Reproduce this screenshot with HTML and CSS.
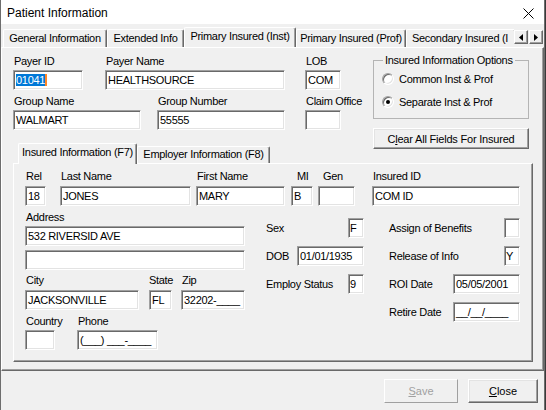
FILE: index.html
```html
<!DOCTYPE html>
<html lang="en">
<head>
    <meta charset="UTF-8">
    <title>Patient Information</title>
    <link rel="stylesheet" href="styles.css">
</head>
<body>
    <div class="window">
        <div class="titlebar">
            <span class="title">Patient Information</span>
            <svg class="close" width="11" height="11" viewBox="0 0 11 11">
                <path d="M0.5 0.5 L10.5 10.5 M10.5 0.5 L0.5 10.5" stroke="#000" stroke-width="1" fill="none"/>
            </svg>
        </div>

        <div class="tabs">
            <div class="tab-list">
                <div class="tab t-general">General Information</div>
                <div class="tab t-extended">Extended Info</div>
                <div class="tab t-inst active">Primary Insured (Inst)</div>
                <div class="tab t-prof">Primary Insured (Prof)</div>
                <div class="tab t-second">Secondary Insured (I</div>
            </div>
            <div class="tab-scroll">
                <span class="arrow"><svg width="4" height="7" viewBox="0 0 4 7"><path d="M4 0 L0 3.5 L4 7 Z" fill="#000"/></svg></span>
                <span class="arrow"><svg width="4" height="7" viewBox="0 0 4 7"><path d="M0 0 L4 3.5 L0 7 Z" fill="#000"/></svg></span>
            </div>
        </div>

        <div class="page">
            <div class="top">
                <div class="top-left">
                    <div class="row">
                        <div class="field f-payer-id">
                            <label>Payer ID</label>
                            <div class="box"><span class="sel">01041</span><span class="caret"></span></div>
                        </div>
                        <div class="field f-payer-name">
                            <label>Payer Name</label>
                            <div class="box">HEALTHSOURCE</div>
                        </div>
                        <div class="field f-lob">
                            <label>LOB</label>
                            <div class="box">COM</div>
                        </div>
                    </div>
                    <div class="row">
                        <div class="field f-group-name">
                            <label>Group Name</label>
                            <div class="box">WALMART</div>
                        </div>
                        <div class="field f-group-number">
                            <label>Group Number</label>
                            <div class="box">55555</div>
                        </div>
                        <div class="field f-claim-office">
                            <label>Claim Office</label>
                            <div class="box"></div>
                        </div>
                    </div>
                </div>
                <div class="top-right">
                    <fieldset class="options">
                        <legend>Insured Information Options</legend>
                        <div class="radio first"><span class="dot"></span>Common Inst &amp; Prof</div>
                        <div class="radio"><span class="dot checked"></span>Separate Inst &amp; Prof</div>
                    </fieldset>
                    <button class="btn btn-clear">C<u>l</u>ear All Fields For Insured</button>
                </div>
            </div>

            <div class="subtabs">
                <div class="tab s-insured active">Insured Information (F7)</div>
                <div class="tab s-employer">Employer Information (F8)</div>
            </div>

            <div class="subpage">
                <div class="row">
                    <div class="field s f-rel">
                        <label>Rel</label>
                        <div class="box">18</div>
                    </div>
                    <div class="field s f-last">
                        <label>Last Name</label>
                        <div class="box">JONES</div>
                    </div>
                    <div class="field s f-first">
                        <label>First Name</label>
                        <div class="box">MARY</div>
                    </div>
                    <div class="field s f-mi">
                        <label>MI</label>
                        <div class="box">B</div>
                    </div>
                    <div class="field s f-gen">
                        <label>Gen</label>
                        <div class="box"></div>
                    </div>
                    <div class="field s f-insured-id">
                        <label>Insured ID</label>
                        <div class="box">COM ID</div>
                    </div>
                </div>

                <div class="lower">
                    <div class="addr-col">
                        <div class="field f-address">
                            <label>Address</label>
                            <div class="box">532 RIVERSID AVE</div>
                        </div>
                        <div class="box address2"></div>
                        <div class="row city-row">
                            <div class="field s f-city">
                                <label>City</label>
                                <div class="box">JACKSONVILLE</div>
                            </div>
                            <div class="field s f-state">
                                <label>State</label>
                                <div class="box">FL</div>
                            </div>
                            <div class="field s f-zip">
                                <label>Zip</label>
                                <div class="box">32202-____</div>
                            </div>
                        </div>
                        <div class="row country-row">
                            <div class="field f-country">
                                <label>Country</label>
                                <div class="box"></div>
                            </div>
                            <div class="field f-phone">
                                <label>Phone</label>
                                <div class="box">(___) ___-____</div>
                            </div>
                        </div>
                    </div>

                    <div class="mid-col">
                        <div class="pair"><span>Sex</span><div class="box b-small">F</div></div>
                        <div class="pair"><span>DOB</span><div class="box b-date">01/01/1935</div></div>
                        <div class="pair"><span>Employ Status</span><div class="box b-small">9</div></div>
                    </div>

                    <div class="right-col">
                        <div class="pair"><span>Assign of Benefits</span><div class="box b-small"></div></div>
                        <div class="pair"><span>Release of Info</span><div class="box b-small">Y</div></div>
                        <div class="pair"><span>ROI Date</span><div class="box b-date">05/05/2001</div></div>
                        <div class="pair"><span>Retire Date</span><div class="box b-date">__/__/____</div></div>
                    </div>
                </div>
            </div>
        </div>

        <div class="footer">
            <button class="btn btn-save" disabled><u>S</u>ave</button>
            <button class="btn btn-close"><u>C</u>lose</button>
        </div>
    </div>
</body>
</html>
```

FILE: styles.css
```css
* {
    box-sizing: border-box;
}

html, body {
    margin: 0;
}

body {
    background: #3a3a3a;
    font-family: "Liberation Sans", Arial, sans-serif;
    font-size: 11px;
    letter-spacing: -0.3px;
    color: #000;
}

.window {
    width: 545px;
    height: 410px;
    background: #f0f0f0;
    border-left: 1px solid #6d6d6d;
    border-right: 1px solid #6d6d6d;
    overflow: hidden;
}

/* title bar */
.titlebar {
    height: 24px;
    background: #fff;
    display: flex;
    align-items: center;
    justify-content: space-between;
    padding: 2px 10px 0 6px;
}

.title {
    font-size: 12px;
    letter-spacing: 0;
}

/* tab strips */
.tabs {
    display: flex;
    align-items: flex-end;
    height: 23px;
    padding-left: 2px;
    margin-right: 1px;
}

.tab-list {
    display: flex;
    align-items: flex-end;
    flex: 1;
    height: 100%;
    overflow: hidden;
}

.tab {
    flex: none;
    height: 18px;
    line-height: 16px;
    text-align: center;
    white-space: nowrap;
    border: 1px solid;
    border-color: #fff #696969 transparent #fff;
    border-bottom: none;
    box-shadow: inset -1px 0 #a0a0a0;
    border-radius: 2px 2px 0 0;
}

.tab.active {
    height: 21px;
    margin-bottom: -1px;
    line-height: 16px;
    background: #f0f0f0;
    position: relative;
    z-index: 1;
}

.t-general { width: 104px; }
.t-extended { width: 77px; }
.t-inst { width: 112px; }
.t-prof { width: 110px; }
.t-second { width: 110px; text-align: left; padding-left: 5px; }

.tab-scroll {
    display: flex;
    gap: 1px;
    margin-bottom: 3px;
}

.arrow {
    width: 14px;
    height: 14px;
    display: flex;
    align-items: center;
    justify-content: center;
    border: 1px solid;
    border-color: #fff #696969 #696969 #fff;
    box-shadow: inset -1px -1px #a0a0a0;
}

/* outer page */
.page {
    border: 1px solid;
    border-color: #fff #696969 #696969 #fff;
    box-shadow: inset -1px -1px #a0a0a0;
    padding: 7px 0 8px 11px;
}

.top {
    display: flex;
    height: 88px;
}

.top-left {
    width: 360px;
}

.row {
    display: flex;
}

.top-left .row + .row {
    margin-top: 5px;
}

.field label {
    display: block;
    line-height: 13px;
    padding-left: 1px;
    white-space: nowrap;
}

.field .box {
    margin-top: 2px;
}

.field.s .box {
    margin-top: 3px;
}

.box {
    height: 20px;
    line-height: 18px;
    padding: 0 2px;
    background: #fff;
    border: 1px solid;
    border-color: #a0a0a0 #fff #fff #a0a0a0;
    box-shadow: inset 1px 1px #696969, inset -1px -1px #e3e3e3;
    white-space: nowrap;
    overflow: hidden;
}

.sel {
    background: #0078d7;
    color: #fff;
}

.caret {
    display: inline-block;
    width: 2px;
    height: 12px;
    vertical-align: -2px;
    background: #ff8728;
}

.f-payer-id { width: 70px; }
.f-payer-name { width: 180px; margin-left: 22px; }
.f-lob { width: 36px; margin-left: 20px; }
.f-group-name { width: 128px; }
.f-group-number { width: 128px; margin-left: 16px; }
.f-claim-office { width: 36px; margin-left: 20px; }

/* options group */
.top-right {
    width: 156px;
}

.options {
    width: 156px;
    height: 64px;
    margin: 0;
    padding: 0 0 0 8px;
    border: 1px solid #b4b4b4;
    min-inline-size: 0;
}

.options legend {
    padding: 0 2px;
    margin-left: 1px;
    line-height: 11px;
}

.radio {
    display: flex;
    align-items: center;
    gap: 5px;
    height: 18px;
    margin-top: 5px;
}

.radio.first {
    margin-top: 4px;
}

.dot {
    width: 12px;
    height: 12px;
    border-radius: 50%;
    background: #fff;
    border: 1px solid;
    border-color: #a0a0a0 #fff #fff #a0a0a0;
    box-shadow: inset 1px 1px #696969, inset -1px -1px #e3e3e3;
    display: flex;
    align-items: center;
    justify-content: center;
}

.dot.checked::after {
    content: "";
    width: 4px;
    height: 4px;
    border-radius: 50%;
    background: #000;
}

.btn {
    font: inherit;
    letter-spacing: 0;
    color: #000;
    background: #f0f0f0;
    padding: 0;
    border: 1px solid;
    border-color: #fff #696969 #696969 #fff;
    box-shadow: inset -1px -1px #a0a0a0, inset 1px 1px #e3e3e3;
}

.btn-clear {
    width: 156px;
    height: 21px;
    margin-top: 9px;
    letter-spacing: -0.2px;
}

/* inner tabs */
.subtabs {
    display: flex;
    align-items: flex-end;
    height: 20px;
    margin-left: 5px;
}

.subtabs .tab {
    height: 17px;
    line-height: 15px;
}

.subtabs .tab.active {
    height: 21px;
    line-height: 17px;
}

.s-insured { width: 119px; }
.s-employer { width: 133px; }

.subpage {
    width: 520px;
    border: 1px solid;
    border-color: #fff #696969 #696969 #fff;
    box-shadow: inset -1px -1px #a0a0a0;
    padding: 6px 0 11px 11px;
}

.f-rel { width: 21px; }
.f-last { width: 131px; margin-left: 14px; }
.f-first { width: 89px; margin-left: 5px; }
.f-mi { width: 22px; margin-left: 6px; }
.f-mi label { padding-left: 6px; }
.f-gen { width: 37px; margin-left: 5px; }
.f-gen label { padding-left: 5px; }
.f-insured-id { width: 148px; margin-left: 17px; }

.lower {
    display: flex;
}

.addr-col {
    width: 220px;
}

.f-address {
    margin-top: 5px;
}

.address2 {
    margin-top: 4px;
}

.city-row {
    margin-top: 4px;
}

.country-row {
    margin-top: 5px;
}

.f-city { width: 114px; }
.f-state { width: 23px; margin-left: 10px; }
.f-state label { padding-left: 0; }
.f-zip { width: 64px; margin-left: 9px; }
.f-country { width: 30px; }
.f-phone { width: 81px; margin-left: 22px; }

.mid-col {
    width: 98px;
    margin-left: 21px;
    margin-top: 12px;
}

.right-col {
    width: 131px;
    margin-left: 25px;
    margin-top: 12px;
}

.pair {
    display: flex;
    align-items: center;
    justify-content: space-between;
    height: 20px;
    margin-bottom: 8px;
    white-space: nowrap;
}

.b-small { width: 16px; padding: 0 1px; }
.b-date { width: 67px; }

/* bottom buttons */
.footer {
    display: flex;
    justify-content: flex-end;
    gap: 10px;
    padding: 8px 6px 0 0;
}

.btn-save {
    width: 74px;
    height: 24px;
    color: #a0a0a0;
    border-color: #fff #a0a0a0 #a0a0a0 #fff;
    box-shadow: none;
}

.btn-close {
    width: 70px;
    height: 24px;
}
```
